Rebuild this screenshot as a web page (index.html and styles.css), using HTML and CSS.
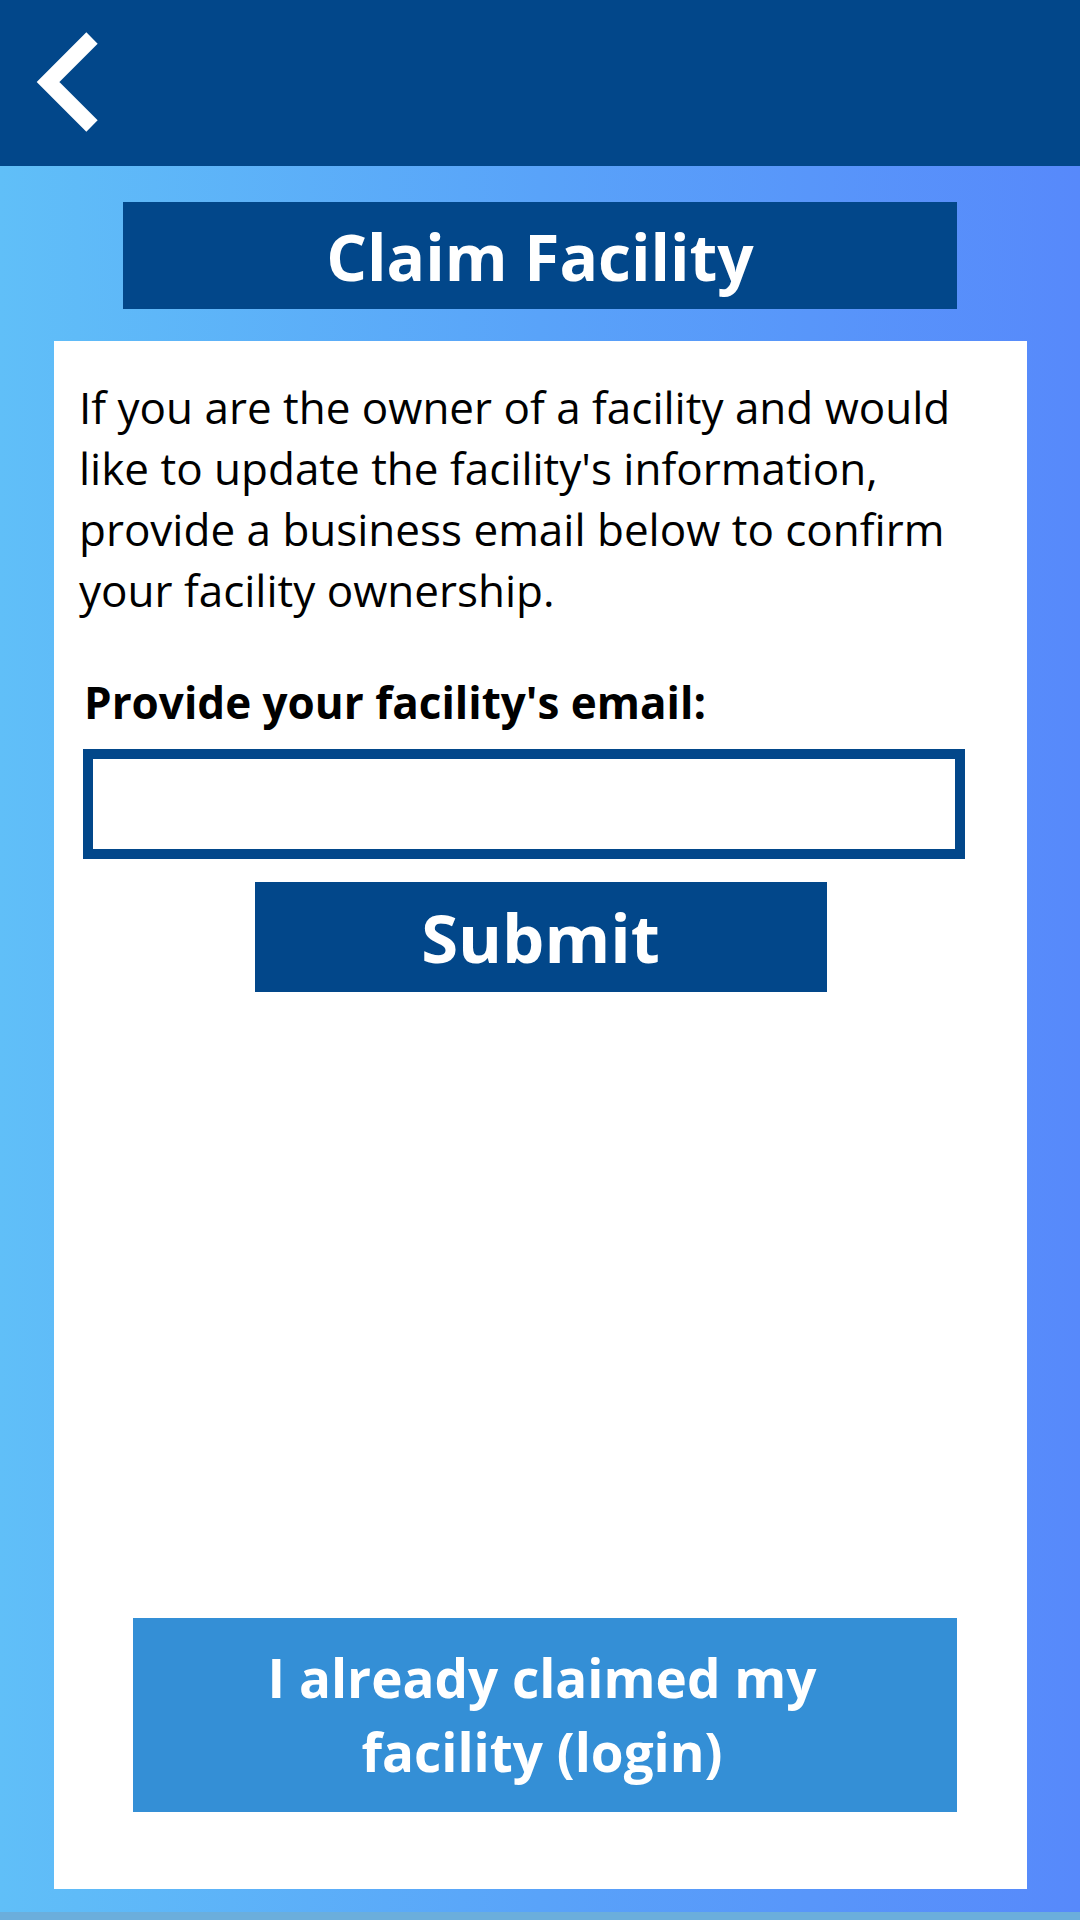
FILE: index.html
```html
<!DOCTYPE html>
<html lang="en">
<head>
<meta charset="utf-8">
<title>Claim Facility</title>
<link rel="stylesheet" href="styles.css">
</head>
<body>
<div class="app">
  <header class="topbar">
    <button class="back" aria-label="Back">
      <svg width="110" height="166" viewBox="0 0 110 166" aria-hidden="true">
        <path d="M92 38 L48 82 L92 126" fill="none" stroke="#ffffff" stroke-width="16" stroke-linejoin="miter"/>
      </svg>
    </button>
  </header>
  <main class="main">
    <h1 class="title">Claim Facility</h1>
    <section class="card">
      <p class="intro">If you are the owner of a facility and would like to update the facility's information, provide a business email below to confirm your facility ownership.</p>
      <label class="label" for="email">Provide your facility's email:</label>
      <input class="email" id="email" type="email">
      <button class="submit">Submit</button>
      <button class="login">I already claimed my<br>facility (login)</button>
    </section>
  </main>
  <div class="strip"></div>
</div>
</body>
</html>
```
FILE: styles.css
```css
html, body {
  margin: 0;
  padding: 0;
}
body {
  width: 1080px;
  height: 1920px;
  overflow: hidden;
  font-family: "Open Sans", "Noto Sans", sans-serif;
}
.app {
  display: flex;
  flex-direction: column;
  height: 1920px;
  background: linear-gradient(to right, #60bff8 0%, #59a3f9 50%, #5789fb 100%);
}
.topbar {
  height: 166px;
  background: #02478a;
  display: flex;
  align-items: flex-start;
}
.back {
  border: 0;
  padding: 0;
  margin: 0;
  background: transparent;
  width: 110px;
  height: 166px;
}
.back svg {
  display: block;
}
.main {
  flex: 1;
  display: flex;
  flex-direction: column;
  padding: 36px 0 23px 0;
}
.title {
  margin: 0 0 0 123px;
  width: 834px;
  height: 107px;
  background: #02478a;
  color: #ffffff;
  font-size: 64px;
  font-weight: 700;
  display: flex;
  align-items: center;
  justify-content: center;
  line-height: 1;
  padding-top: 2px;
  box-sizing: border-box;
}
.card {
  margin: 32px 0 0 54px;
  width: 973px;
  flex: 1;
  background: #ffffff;
  display: flex;
  flex-direction: column;
  box-sizing: border-box;
  padding: 36px 0 77px 0;
}
.intro {
  margin: 0 0 0 25px;
  width: 920px;
  font-size: 44px;
  line-height: 61px;
  color: #000000;
}
.label {
  margin: 51px 0 0 30px;
  font-size: 44px;
  font-weight: 700;
  color: #000000;
  line-height: 60px;
}
.email {
  margin: 17px 0 0 29px;
  width: 882px;
  height: 110px;
  box-sizing: border-box;
  border: 10px solid #02478a;
  background: #ffffff;
  outline: none;
  padding: 0 16px;
  font-family: inherit;
  font-size: 40px;
}
.submit {
  align-self: center;
  margin-top: 23px;
  width: 572px;
  height: 110px;
  border: 0;
  background: #02478a;
  color: #ffffff;
  font-family: inherit;
  font-size: 67px;
  font-weight: 700;
  line-height: 1;
  padding: 0;
}
.login {
  margin: auto 0 0 79px;
  width: 824px;
  height: 194px;
  border: 0;
  background: #348fd6;
  color: #ffffff;
  font-family: inherit;
  font-size: 53px;
  font-weight: 700;
  line-height: 74px;
  padding: 0 6px 0 0;
}
.strip {
  height: 8px;
  background: #6baedc;
}
```
